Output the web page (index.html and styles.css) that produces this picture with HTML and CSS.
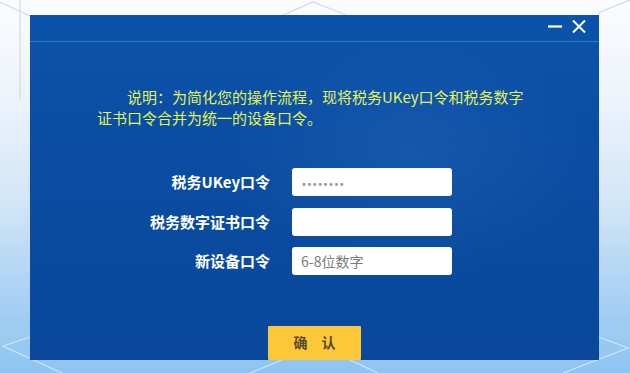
FILE: index.html
```html
<!DOCTYPE html>
<html lang="zh-CN">
<head>
<meta charset="utf-8">
<title>设备口令</title>
<link rel="stylesheet" href="styles.css">
</head>
<body>
<div class="page">
  <svg class="bg-lines" width="630" height="373" viewBox="0 0 630 373">
    <g class="top-lines">
      <polyline points="0,2 30,16"/>
      <polyline points="281,16 313,2 349,16"/>
      <polyline points="598,13 630,0"/>
      <polyline points="20,0 20,100"/>
    </g>
    <g class="bottom-lines">
      <polyline points="30,337 3,346 62,373"/>
      <polyline points="282,360 250,373"/>
      <polyline points="350,360 378,373"/>
      <polyline points="599,337 628,348 563,373"/>
    </g>
  </svg>
  <div class="dialog">
    <div class="titlebar">
      <button class="win-btn" aria-label="最小化">
        <svg width="14" height="12" viewBox="0 0 14 12"><path d="M0 6.5H14" stroke="#fff" stroke-width="2.2"/></svg>
      </button>
      <button class="win-btn" aria-label="关闭">
        <svg width="14" height="13" viewBox="0 0 14 13"><path d="M1 0.5L13 12.5M13 0.5L1 12.5" stroke="#fff" stroke-width="2"/></svg>
      </button>
    </div>
    <div class="content">
      <p class="notice">说明：为简化您的操作流程，现将税务UKey口令和税务数字证书口令合并为统一的设备口令。</p>
      <div class="form">
        <label class="label" for="ukey">税务UKey口令</label>
        <input class="field dots" id="ukey" type="text" placeholder="••••••••">
        <label class="label" for="cert">税务数字证书口令</label>
        <input class="field" id="cert" type="text">
        <label class="label" for="newpwd">新设备口令</label>
        <input class="field" id="newpwd" type="text" placeholder="6-8位数字">
      </div>
      <div class="actions">
        <button class="confirm">确　认</button>
      </div>
    </div>
  </div>
</div>
</body>
</html>
```
FILE: styles.css
```css
* { box-sizing: border-box; }
html, body { margin: 0; padding: 0; }
body {
  width: 630px;
  height: 373px;
  overflow: hidden;
  font-family: "Noto Sans CJK SC", "Noto Sans", sans-serif;
  background: linear-gradient(180deg, #fbfcfe 0%, #eef4fb 25%, #d2e5f7 55%, #a9d0f3 80%, #8ec4f1 100%);
}
.page {
  position: relative;
  width: 630px;
  height: 373px;
  padding: 15px 31px 0 30px;
}
.bg-lines {
  position: absolute;
  left: 0;
  top: 0;
  z-index: 0;
}
.bg-lines polyline { fill: none; stroke-width: 1.2; }
.top-lines polyline { stroke: rgba(190, 205, 225, 0.7); }
.bottom-lines polyline { stroke: rgba(225, 240, 255, 0.75); }

.dialog {
  position: relative;
  z-index: 1;
  width: 569px;
  height: 345px;
  overflow: hidden;
  background:
    radial-gradient(ellipse 180px 120px at 380px 140px, rgba(80, 140, 215, 0.16), rgba(80, 140, 215, 0) 100%),
    linear-gradient(180deg, #0b53aa 0%, #0a4da2 40%, #09489b 100%);
  display: flex;
  flex-direction: column;
}
.titlebar {
  height: 33px;
  border-bottom: 1px solid rgba(95, 150, 215, 0.55);
  display: flex;
  justify-content: flex-end;
  align-items: center;
  gap: 10px;
  padding: 0 13px 4px 0;
}
.win-btn {
  border: 0;
  background: none;
  padding: 0;
  margin: 0;
  display: flex;
  align-items: center;
  cursor: pointer;
}
.content {
  padding-top: 44px;
  display: flex;
  flex-direction: column;
}
.notice {
  margin: 0 0 0 67px;
  width: 438px;
  font-size: 15px;
  line-height: 21px;
  text-indent: 30px;
  color: #e2f25c;
}
.form {
  margin-top: 40px;
  display: grid;
  grid-template-columns: 240px 160px;
  column-gap: 22px;
  row-gap: 11.5px;
  align-items: center;
}
.label {
  text-align: right;
  color: #ffffff;
  font-weight: bold;
  font-size: 15px;
  line-height: 20px;
}
.field {
  height: 28px;
  width: 160px;
  border: 0;
  border-radius: 3px;
  background: #ffffff;
  padding: 0 9px;
  font-family: "Noto Sans CJK SC", "Noto Sans", sans-serif;
  font-size: 14px;
  color: #333;
  outline: none;
}
.field::placeholder { color: #7a7a7a; }
.field.dots::placeholder {
  color: #999999;
  font-family: "DejaVu Sans", sans-serif;
  font-size: 10px;
  letter-spacing: -0.5px;
}
.actions {
  margin-top: 51px;
  display: flex;
  justify-content: flex-start;
  padding-left: 238px;
}
.confirm {
  width: 93px;
  height: 34px;
  border: 0;
  border-radius: 1px;
  background: #fcc83a;
  color: #5a4a2c;
  font-family: "Noto Sans CJK SC", "Noto Sans", sans-serif;
  font-weight: bold;
  font-size: 14px;
  letter-spacing: 0;
  padding: 0 0 2px 0;
  cursor: pointer;
}
```
